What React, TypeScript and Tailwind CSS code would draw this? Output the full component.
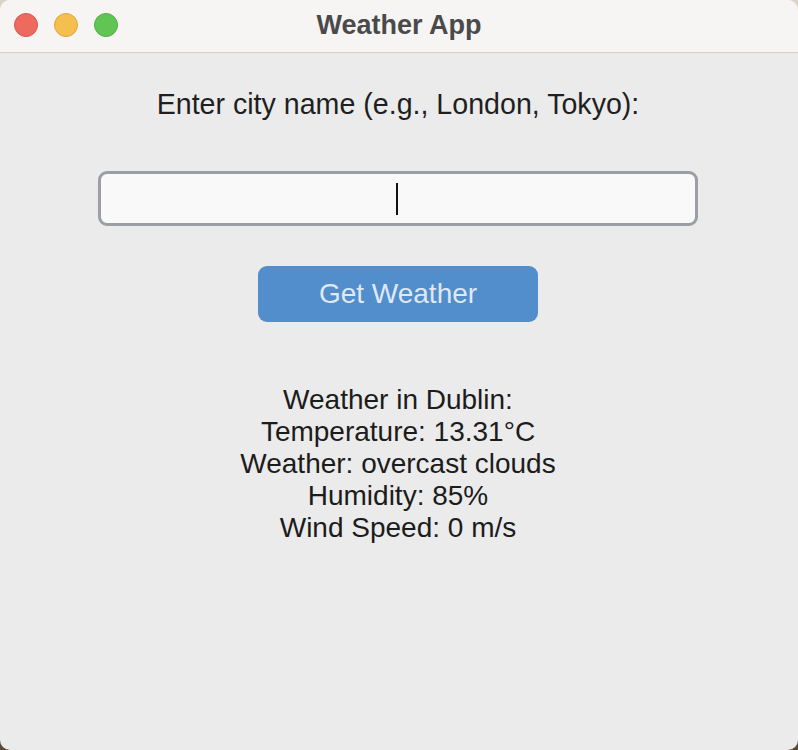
import { FC } from 'react';

const font = { fontFamily: '"Liberation Sans", Arial, sans-serif' };

const App: FC = () => {
  const lines = [
    'Weather in Dublin:',
    'Temperature: 13.31°C',
    'Weather: overcast clouds',
    'Humidity: 85%',
    'Wind Speed: 0 m/s',
  ];

  return (
    <div className="w-[798px] h-[750px] bg-gradient-to-b from-[#d9d4c6] to-[#5b4a38]" style={font}>
      <div className="w-full h-full flex flex-col rounded-[10px] overflow-hidden bg-[#ebebeb]">
        {/* Title bar */}
        <div className="relative h-[53px] shrink-0 bg-[#f6f5f3] border-b border-[#d0d0d0] flex items-center justify-center">
          <div className="absolute left-[14px] top-[13px] flex gap-[16px]">
            <span className="w-[24px] h-[24px] rounded-full bg-[#ee6a5f] border border-[#d9564c]" />
            <span className="w-[24px] h-[24px] rounded-full bg-[#f5bf4f] border border-[#dda83a]" />
            <span className="w-[24px] h-[24px] rounded-full bg-[#61c554] border border-[#51ad44]" />
          </div>
          <span className="text-[27px] leading-[32px] font-bold text-[#4a4a4a] -mt-[2px]">Weather App</span>
        </div>

        {/* Content */}
        <div className="flex flex-col items-center pr-[2px]">
          <p className="mt-[35px] text-[28.6px] leading-[32px] text-[#1f1f1f]">
            Enter city name (e.g., London, Tokyo):
          </p>
          <div className="mt-[51px] w-[600px] h-[55px] rounded-[9px] border-[3px] border-[#9b9fa4] bg-[#f9f9f9] flex items-center justify-center">
            <span className="w-[2px] h-[32px] bg-[#111] ml-[-2px]" />
          </div>
          <button className="mt-[40px] w-[280px] h-[56px] rounded-[9px] bg-[#528dcc] text-[#dfe8f3] text-[28px] leading-[32px] flex items-center justify-center">
            Get Weather
          </button>
          <div className="mt-[62px] flex flex-col items-center text-[28px] leading-[32px] text-[#1c1c1c]">
            {lines.map((l) => (
              <span key={l}>{l}</span>
            ))}
          </div>
        </div>
      </div>
    </div>
  );
};

export default App;
